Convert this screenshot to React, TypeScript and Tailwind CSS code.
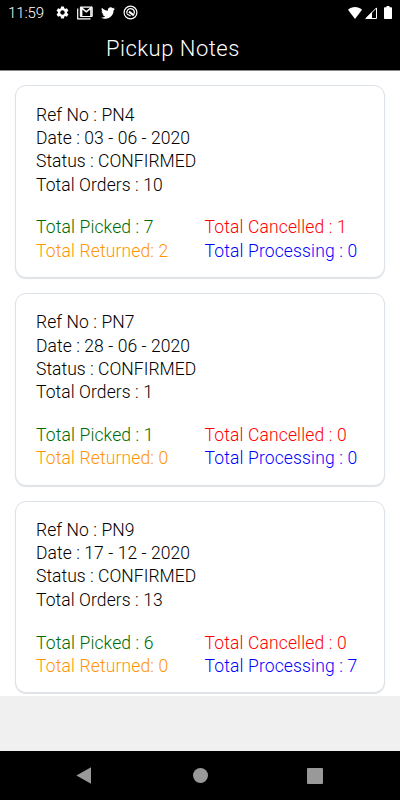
import { MdSettings } from 'react-icons/md'
import { FaTwitter } from 'react-icons/fa'

type PickupNote = {
  refNo: string
  date: string
  status: string
  orders: number
  picked: number
  cancelled: number
  returned: number
  processing: number
}

const notes: PickupNote[] = [
  { refNo: 'PN4', date: '03 - 06 - 2020', status: 'CONFIRMED', orders: 10, picked: 7, cancelled: 1, returned: 2, processing: 0 },
  { refNo: 'PN7', date: '28 - 06 - 2020', status: 'CONFIRMED', orders: 1, picked: 1, cancelled: 0, returned: 0, processing: 0 },
  { refNo: 'PN9', date: '17 - 12 - 2020', status: 'CONFIRMED', orders: 13, picked: 6, cancelled: 0, returned: 0, processing: 7 },
]

function StatusBar() {
  return (
    <div className="flex h-[25px] items-center justify-between pl-2 pr-2 text-white">
      <div className="flex items-center">
        <span className="w-[47px] pt-px text-[15px] font-light tracking-[-0.1px]">11:59</span>
        <MdSettings className="size-[15px]" />
        {/* Mail */}
        <svg className="ml-[7px] h-[14px] w-4" viewBox="0 0 16 14" fill="none" stroke="currentColor">
          <path d="M0.7 2.5V12.9H13.5" strokeWidth={1.2} />
          <rect x="3.4" y="1.1" width="11.8" height="9.4" rx="0.6" strokeWidth={1.1} />
          <path d="M4.6 10V2L9.3 5.8L14 2V10" strokeWidth={1.6} />
        </svg>
        <FaTwitter className="ml-2 size-[14px]" />
        {/* Do not track */}
        <svg className="ml-[7.5px] size-[15px]" viewBox="0 0 15 15" fill="none" stroke="currentColor">
          <circle cx="7.5" cy="7.5" r="6.4" strokeWidth={1.2} />
          <path d="M4 8.6A3.8 3.8 0 1 1 11 9" strokeWidth={1.3} />
          <path d="M6 6.6L10.8 10.4" strokeWidth={2} />
          <path d="M4 9L7.6 11" strokeWidth={1.3} />
        </svg>
      </div>
      <div className="flex items-center">
        <svg className="h-3 w-[14px]" viewBox="0 0 14 12" fill="currentColor">
          <path d="M0 2.8C4 -0.9 10 -0.9 14 2.8L7 12Z" />
        </svg>
        <svg className="ml-[3px] size-3" viewBox="0 0 12 12">
          <path d="M0.9 11.5L11.5 0.9V11.5Z" fill="none" stroke="currentColor" />
          <path d="M0.5 11.5L7 5V11.5Z" fill="currentColor" />
        </svg>
        {/* Battery */}
        <svg className="ml-[7px] h-[13px] w-2" viewBox="0 0 8 13" fill="currentColor">
          <path d="M2.5 0H5.5V1.3H7.3Q8 1.3 8 2V12.3Q8 13 7.3 13H0.7Q0 13 0 12.3V2Q0 1.3 0.7 1.3H2.5Z" />
        </svg>
      </div>
    </div>
  )
}

function NoteCard({ note }: { note: PickupNote }) {
  return (
    <div className="h-[192.6px] rounded-[11px] border border-[#dce2e9] bg-white px-5 pt-[17.2px] shadow-[0_1px_1px_rgba(0,0,0,0.12)]">
      <p>Ref No : {note.refNo}</p>
      <p>Date : {note.date}</p>
      <p className="tracking-[0.04px]">Status : {note.status}</p>
      <p>Total Orders : {note.orders}</p>
      <div className="mt-[19.5px] grid grid-cols-2 gap-x-[9px] tracking-[0.14px]">
        <p className="text-[#006a00]">Total Picked : {note.picked}</p>
        <p className="text-[#ff0000]">Total Cancelled : {note.cancelled}</p>
        <p className="text-[#ff9500]">Total Returned: {note.returned}</p>
        <p className="text-[#0000ff]">Total Processing : {note.processing}</p>
      </div>
    </div>
  )
}

function NavigationBar() {
  return (
    <nav className="flex h-[49px] items-center bg-black text-[#999]">
      <svg className="ml-[76px] h-[17px] w-[15px]" viewBox="0 0 15 17" fill="currentColor">
        <path d="M0.4 8.5L15 0.3V16.7Z" />
      </svg>
      <div className="ml-[101.5px] size-[15px] rounded-full bg-[#999]" />
      <div className="ml-[99.5px] size-4 rounded-[1px] bg-[#999]" />
    </nav>
  )
}

export default function App() {
  return (
    <div className="flex h-[800px] w-[400px] flex-col overflow-hidden bg-[#f0f0f0] font-['Roboto',sans-serif]">
      <header className="h-[70px] shrink-0 bg-black">
        <StatusBar />
        <h1 className="pl-[106px] pt-[9px] text-[22px] font-light leading-[30px] tracking-[0.5px] text-white">Pickup Notes</h1>
      </header>
      <main className="flex-1">
        <div className="flex h-[626px] flex-col gap-[15px] border-t border-[#8a8a8e] bg-white px-[15px] pt-[14.4px] text-[17.5px] font-light leading-[23.35px] tracking-[0.08px] text-black">
          {notes.map((note) => (
            <NoteCard key={note.refNo} note={note} />
          ))}
        </div>
      </main>
      <NavigationBar />
    </div>
  )
}
